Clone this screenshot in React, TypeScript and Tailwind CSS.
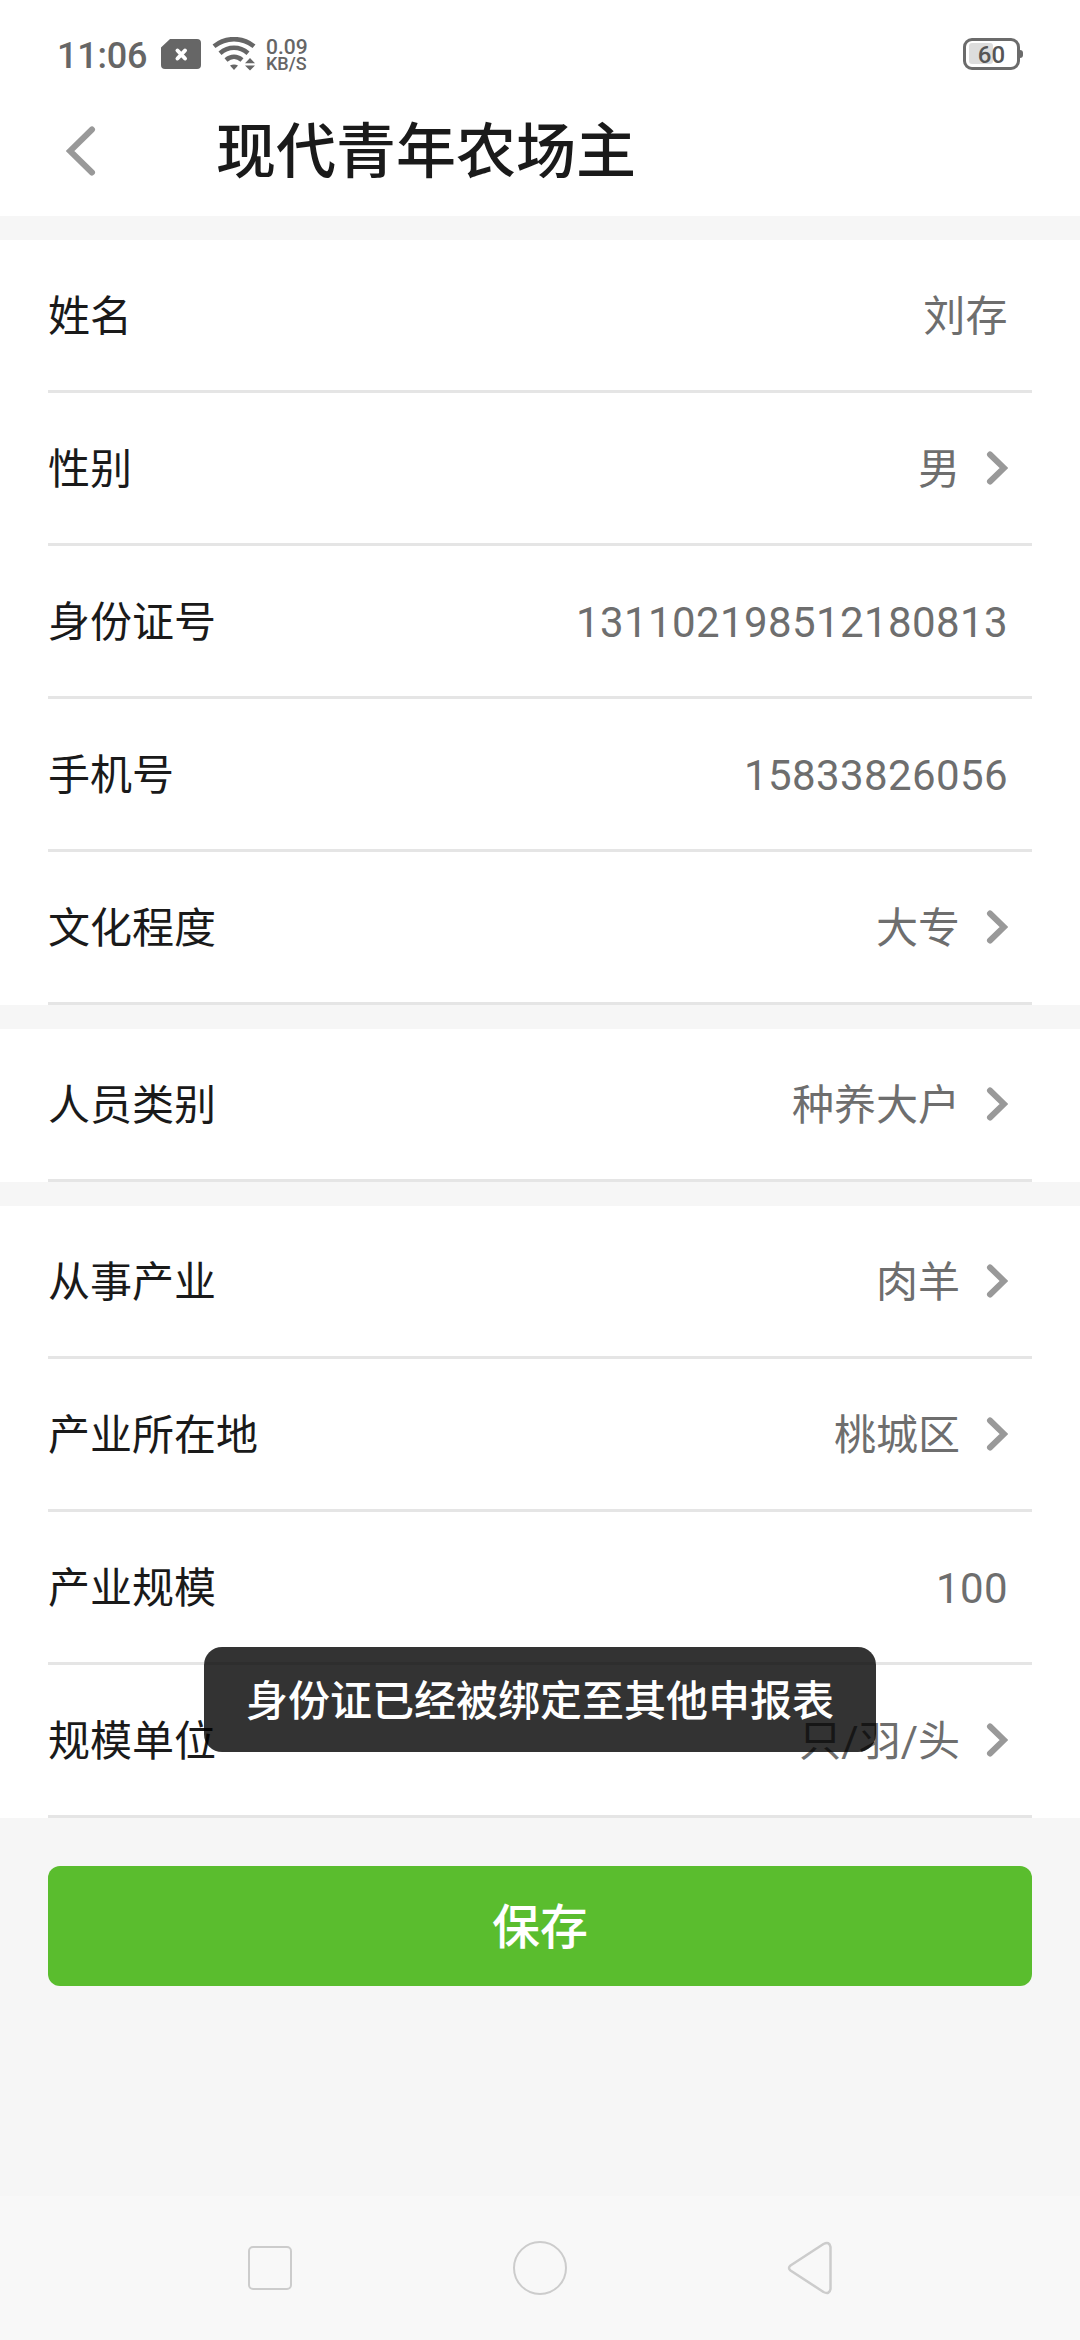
interface Field {
  label: string
  value: string
  selectable?: boolean
}

const GROUPS: Field[][] = [
  [
    { label: '姓名', value: '刘存' },
    { label: '性别', value: '男', selectable: true },
    { label: '身份证号', value: '131102198512180813' },
    { label: '手机号', value: '15833826056' },
    { label: '文化程度', value: '大专', selectable: true },
  ],
  [{ label: '人员类别', value: '种养大户', selectable: true }],
  [
    { label: '从事产业', value: '肉羊', selectable: true },
    { label: '产业所在地', value: '桃城区', selectable: true },
    { label: '产业规模', value: '100' },
    { label: '规模单位', value: '只/羽/头', selectable: true },
  ],
]

function StatusBar() {
  return (
    <div className="flex h-[84px] justify-between pt-[34px] pr-[57px] pl-[57px] font-medium text-[#666666]">
      <div className="flex h-10 items-center">
        <span className="w-[104px] pt-[3px] text-[36px] leading-10 tracking-[-0.2px] whitespace-nowrap">11:06</span>
        {/* SIM card, no service */}
        <svg width="40" height="30" viewBox="0 0 40 30" className="shrink-0">
          <path d="M9 0H36a4 4 0 0 1 4 4V26a4 4 0 0 1-4 4H4a4 4 0 0 1-4-4V8.500Z" fill="#666666" />
          <path d="M16.500 11.500l7.500 8M24 11.500l-7.500 8" stroke="#fff" strokeWidth="4" strokeLinecap="round" />
        </svg>
        <svg width="44" height="34" viewBox="0 0 44 34" className="ml-[11px] shrink-0">
          <g fill="none" stroke="#666666" strokeWidth="4.600">
            <path d="M2 9.200C14 -.2 30 -.2 42 9.200" />
            <path d="M8 16.200C16.500 9 27.500 9 36 16.200" />
            <path d="M14 23C19 18.800 25 18.800 30 23" />
          </g>
          <path d="M18 28.500C20.500 27 23.500 27 26 28.500L22 33Z" fill="#666666" />
          <path d="M33 26.200H43L38 21ZM33 28.500H43L38 33.500Z" fill="#666666" />
        </svg>
        <div className="ml-[10px] flex flex-col pt-px">
          <span className="h-[18px] text-[21px] leading-[18px]">0.09</span>
          <span className="h-[16px] text-[18px] leading-[16px]">KB/S</span>
        </div>
      </div>
      <div className="flex h-10 items-center">
        <div className="relative flex h-8 w-[57px] items-center justify-center rounded-[9px] border-[3.500px] border-[#6b6b6b]">
          <span className="absolute top-[2px] left-[3px] h-[21px] w-6 rounded-[3px] bg-[#dddddd]" />
          <span className="relative pt-0.5 text-[24px] leading-6 text-[#555555]">60</span>
        </div>
        <span className="h-2 w-[3px] rounded-r-full bg-[#6b6b6b]" />
      </div>
    </div>
  )
}

function Header() {
  return (
    <div className="flex h-[132px] items-center pt-0.5 pl-[66px]">
      <svg width="30" height="50" viewBox="0 0 30 50" fill="none" className="shrink-0">
        <path d="M26 3.500L4 25L26 46.500" stroke="#999999" strokeWidth="6" strokeLinecap="round" />
      </svg>
      <h1 className="ml-[120px] pt-[3px] text-[60px] leading-none font-medium text-[#1a1a1a]">现代青年农场主</h1>
    </div>
  )
}

function Row({ field }: { field: Field }) {
  return (
    <div className="mx-12 flex h-[153px] items-center border-b-[3px] border-[#e5e5e5] pr-6 text-[42px]">
      <span className="pt-0.5 text-[#1a1a1a]">{field.label}</span>
      <span className={`ml-auto pt-0.5 text-[#6e6e6e] ${field.selectable ? '' : 'tracking-[0.4px]'}`}>{field.value}</span>
      {field.selectable && (
        <svg width="22" height="36" viewBox="0 0 22 36" fill="none" className="ml-[26px]">
          <path d="M4 4.500L18 18L4 31.500" stroke="#999999" strokeWidth="6" strokeLinecap="round" />
        </svg>
      )}
    </div>
  )
}

function NavBar() {
  return (
    <div className="mt-auto grid h-36 grid-cols-3 place-items-center bg-[#f8f8f8] px-[135px]">
      <div className="h-11 w-11 rounded-[5px] border-[2.500px] border-[#cccccc]" />
      <div className="h-[54px] w-[54px] rounded-full border-[2.500px] border-[#cccccc]" />
      <svg width="50" height="54" viewBox="0 0 50 54" fill="none">
        <path
          d="M5.500 24.500Q2.500 27 5.500 29.500L38.500 51Q44.500 54 45.500 48V6Q44.500 0 38.500 3Z"
          stroke="#cccccc"
          strokeWidth="2.500"
          strokeLinejoin="round"
        />
      </svg>
    </div>
  )
}

export default function App() {
  return (
    <div className="relative flex h-[2340px] w-[1080px] flex-col overflow-hidden bg-[#f6f6f6] font-['Roboto','Noto_Sans_CJK_SC',sans-serif]">
      <div className="bg-white">
        <StatusBar />
        <Header />
      </div>

      <div className="mt-6 flex flex-col gap-6">
        {GROUPS.map(group => (
          <div key={group[0].label} className="bg-white">
            {group.map(f => <Row key={f.label} field={f} />)}
          </div>
        ))}
      </div>

      <button className="mx-12 mt-12 h-[120px] rounded-xl bg-[#5abd2e] pt-[3px] text-[48px] font-medium text-white">
        保存
      </button>

      <NavBar />

      {/* Toast */}
      <div className="absolute top-[1647px] left-[204px] flex h-[105px] w-[672px] items-center justify-center rounded-[18px] bg-black/80 pt-[3px] text-[42px] font-medium text-white">
        身份证已经被绑定至其他申报表
      </div>
    </div>
  )
}
